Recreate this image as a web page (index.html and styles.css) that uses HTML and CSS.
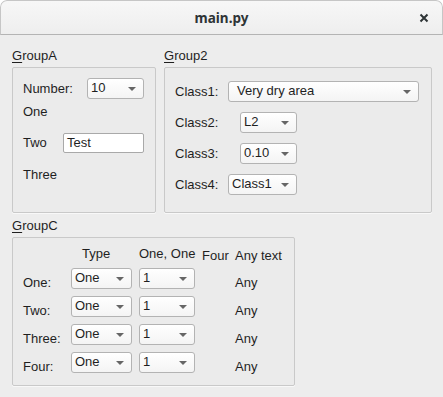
FILE: index.html
```html
<!DOCTYPE html>
<html lang="en">
<head>
    <meta charset="UTF-8">
    <meta name="viewport" content="width=device-width, initial-scale=1.0">
    <title>main.py</title>
    <link rel="stylesheet" href="styles.css">
</head>
<body>

    <div class="window">
        <!-- Title bar -->
        <header class="titlebar">
            <span class="title">main.py</span>
            <span class="close">
                <svg width="10" height="10" viewBox="0 0 10 10">
                    <path d="M1.5 1.5 L8.5 8.5 M8.5 1.5 L1.5 8.5" stroke="#2e3436" stroke-width="2" fill="none"/>
                </svg>
            </span>
        </header>

        <main class="content">
            <div class="top-row">
                <!-- GroupA -->
                <section class="group group-a">
                    <div class="group-title"><u>G</u>roupA</div>
                    <div class="group-box">
                        <div class="row">
                            <span class="label number-label">Number:</span>
                            <div class="combo w57"><span class="combo-text">10</span><span class="arrow"></span></div>
                        </div>
                        <div class="label line one">One</div>
                        <div class="row two">
                            <span class="label two-label">Two</span>
                            <div class="line-edit">Test</div>
                        </div>
                        <div class="label line three">Three</div>
                    </div>
                </section>

                <!-- Group2 -->
                <section class="group group-2">
                    <div class="group-title"><u>G</u>roup2</div>
                    <div class="group-box">
                        <div class="row">
                            <span class="label class-label">Class1:</span>
                            <div class="combo wide"><span class="combo-text">Very dry area</span><span class="arrow"></span></div>
                        </div>
                        <div class="row">
                            <span class="label class-label">Class2:</span>
                            <div class="combo w57 inset"><span class="combo-text">L2</span><span class="arrow"></span></div>
                        </div>
                        <div class="row">
                            <span class="label class-label">Class3:</span>
                            <div class="combo w57 inset"><span class="combo-text">0.10</span><span class="arrow"></span></div>
                        </div>
                        <div class="row">
                            <span class="label class-label">Class4:</span>
                            <div class="combo w69"><span class="combo-text">Class1</span><span class="arrow"></span></div>
                        </div>
                    </div>
                </section>
            </div>

            <!-- GroupC -->
            <section class="group group-c">
                <div class="group-title"><u>G</u>roupC</div>
                <div class="group-box grid">
                    <span></span>
                    <span class="head type-head">Type</span>
                    <span class="head">One, One</span>
                    <span class="head low">Four</span>
                    <span class="head low">Any text</span>

                    <span class="label cell">One:</span>
                    <div class="combo"><span class="combo-text">One</span><span class="arrow"></span></div>
                    <div class="combo"><span class="combo-text">1</span><span class="arrow"></span></div>
                    <span></span>
                    <span class="label cell">Any</span>

                    <span class="label cell">Two:</span>
                    <div class="combo"><span class="combo-text">One</span><span class="arrow"></span></div>
                    <div class="combo"><span class="combo-text">1</span><span class="arrow"></span></div>
                    <span></span>
                    <span class="label cell">Any</span>

                    <span class="label cell">Three:</span>
                    <div class="combo"><span class="combo-text">One</span><span class="arrow"></span></div>
                    <div class="combo"><span class="combo-text">1</span><span class="arrow"></span></div>
                    <span></span>
                    <span class="label cell">Any</span>

                    <span class="label cell">Four:</span>
                    <div class="combo"><span class="combo-text">One</span><span class="arrow"></span></div>
                    <div class="combo"><span class="combo-text">1</span><span class="arrow"></span></div>
                    <span></span>
                    <span class="label cell">Any</span>
                </div>
            </section>
        </main>
    </div>

</body>
</html>
```

FILE: styles.css
```css
html, body {
    margin: 0;
    height: 100%;
    background: #ffffff;
}
body {
    font-family: "Liberation Sans", Arial, sans-serif;
    font-size: 13px;
    color: #1f1f1f;
}
.window {
    height: 100%;
    background: #ededed;
    border-radius: 7px 7px 0 0;
    overflow: hidden;
}
.titlebar {
    height: 35px;
    box-sizing: border-box;
    display: flex;
    align-items: center;
    justify-content: center;
    position: relative;
    background: linear-gradient(#f7f7f7, #eeeeee);
    border: 1px solid #c6c6c6;
    border-bottom-color: #b4b4b4;
    border-radius: 7px 7px 0 0;
}
.title {
    font-family: "Noto Sans", sans-serif;
    font-weight: bold;
    font-size: 13.5px;
    color: #2e3436;
}
.close {
    position: absolute;
    right: 13px;
    top: 12px;
    width: 10px;
    height: 10px;
    display: flex;
}
.content {
    padding: 13px 11px 0 12px;
}
.top-row {
    display: flex;
    gap: 8px;
}
.group-title {
    line-height: 16px;
    margin-bottom: 3px;
}
.group-title u {
    text-underline-offset: 2px;
}
.group-box {
    box-sizing: border-box;
    border: 1px solid #c9c9c9;
    border-radius: 2px;
    background: #ebebeb;
    box-shadow: 0 1px 0 #f8f8f8;
}
.label {
    line-height: 16px;
    white-space: nowrap;
}
.row {
    display: flex;
    align-items: center;
}

/* combo boxes */
.combo {
    box-sizing: border-box;
    height: 21px;
    display: flex;
    align-items: center;
    justify-content: space-between;
    padding: 0 7px 1px 3px;
    background: linear-gradient(#ffffff, #f4f4f4);
    border: 1px solid #b3b3b3;
    border-radius: 3px;
    line-height: 18px;
    white-space: nowrap;
}
.arrow {
    width: 0;
    height: 0;
    margin-top: 2px;
    border-left: 4px solid transparent;
    border-right: 4px solid transparent;
    border-top: 4px solid #666666;
}
.w57 { width: 57px; }
.w69 { width: 69px; }
.wide {
    width: 191px;
    padding-left: 8px;
}
.inset { margin-left: 12px; }

.line-edit {
    box-sizing: border-box;
    width: 81px;
    height: 20px;
    padding: 0 3px;
    line-height: 18px;
    background: #ffffff;
    border: 1px solid #a9a9a9;
    border-radius: 2px;
}

/* GroupA */
.group-a { width: 144px; }
.group-a .group-box {
    height: 146px;
    padding: 10px 10px 0 10px;
}
.number-label { width: 64px; }
.one { margin-top: 5px; }
.two { margin-top: 13px; }
.two-label { width: 40px; }
.three { margin-top: 14px; }

/* Group2 */
.group-2 { width: 268px; }
.group-2 .group-box {
    height: 146px;
    padding: 13px 12px 0 10px;
    display: flex;
    flex-direction: column;
    gap: 10px;
}
.class-label { width: 53px; }

/* GroupC */
.group-c {
    width: 283px;
    margin-top: 5px;
}
.group-c .grid {
    height: 149px;
    padding: 8px 10px 0 10px;
    display: grid;
    grid-template-columns: 41px 61px 56px 26px 46px;
    grid-template-rows: 15px repeat(4, 21px);
    column-gap: 7px;
    row-gap: 7px;
}
.head {
    line-height: 16px;
    white-space: nowrap;
    align-self: start;
}
.type-head { padding-left: 11px; }
.head.low { margin-top: 2px; }
.cell {
    align-self: start;
    padding-top: 7px;
}
```
